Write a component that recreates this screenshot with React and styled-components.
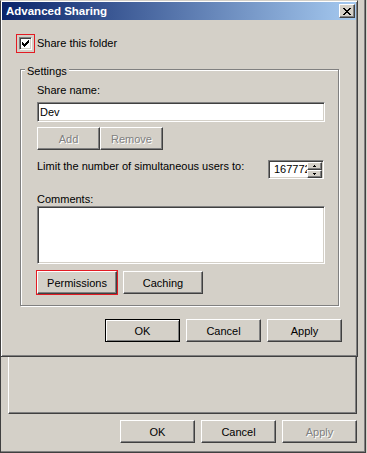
import React from "react";
import styled, { createGlobalStyle, css } from "styled-components";

const GlobalStyle = createGlobalStyle`
  html, body { margin: 0; padding: 0; background: #d4d0c8; }
  body {
    font-family: "Liberation Sans", Arial, sans-serif;
    font-size: 11px;
    color: #000;
  }
  *, *::before, *::after { box-sizing: border-box; }
`;

const raised = css`
  border: 1px solid;
  border-color: #fff #404040 #404040 #fff;
  box-shadow: inset -1px -1px 0 #808080;
`;

const sunken = css`
  border: 1px solid;
  border-color: #808080 #fff #fff #808080;
  box-shadow: inset 1px 1px 0 #404040, inset -1px -1px 0 #d4d0c8;
`;

const Desktop = styled.div`
  position: relative;
  width: 367px;
  height: 453px;
  overflow: hidden;
  background: #d4d0c8;
`;

/* Parent "Properties" window behind the dialog */
const ParentWindow = styled.div`
  width: 366px;
  height: 453px;
  display: flex;
  flex-direction: column;
  justify-content: flex-end;
  border: 1px solid #404040;
  border-top: none;
  box-shadow: inset -1px -1px 0 #808080;
  padding: 0 8px 9px 7px;
  background: #d4d0c8;
`;

const TabPanel = styled.div`
  flex: 1;
  margin-top: 40px;
  ${raised};
`;

const ButtonRow = styled.div`
  display: flex;
  justify-content: flex-end;
  gap: 6px;
  margin-top: ${(p) => p.$mt || 0}px;
  padding-right: ${(p) => p.$pr || 0}px;
`;

const Button = styled.button`
  width: ${(p) => p.$w || 75}px;
  height: 23px;
  padding: 0;
  margin: 0;
  font-family: inherit;
  font-size: 11px;
  color: #000;
  background: #d4d0c8;
  border-radius: 0;
  ${raised};
  ${(p) =>
    p.$default &&
    css`
      border-color: #000;
      box-shadow: inset 1px 1px 0 #fff, inset -1px -1px 0 #808080;
    `}
  ${(p) =>
    p.disabled &&
    css`
      color: #808080;
      text-shadow: 1px 1px 0 #fff;
    `}
  ${(p) =>
    p.$focus &&
    css`
      outline: 1px solid #e31b23;
      outline-offset: 0;
    `}
`;

/* Advanced Sharing dialog, a window lying over the parent */
const Dialog = styled.div`
  position: absolute;
  left: 0;
  top: 0;
  width: 358px;
  height: 357px;
  display: flex;
  flex-direction: column;
  padding: 1px;
  background: #d4d0c8;
  border: 1px solid;
  border-color: #d4d0c8 #404040 #404040 #404040;
  box-shadow: inset 1px 1px 0 #fff, inset -1px -1px 0 #808080;
`;

const TitleBar = styled.div`
  height: 18px;
  display: flex;
  align-items: center;
  justify-content: space-between;
  padding: 0 1px 0 4px;
  background: linear-gradient(to right, #0a246a, #a6caf0);
`;

const Title = styled.span`
  color: #fff;
  font-weight: bold;
  font-size: 11.5px;
  line-height: 18px;
  white-space: nowrap;
`;

const CloseButton = styled.div`
  width: 16px;
  height: 14px;
  display: flex;
  align-items: center;
  justify-content: center;
  background: #d4d0c8;
  ${raised};
`;

const CheckRow = styled.div`
  display: flex;
  align-items: center;
  margin: 14px 0 0 14px;
`;

const FocusBox = styled.span`
  display: flex;
  padding: 2px;
  border: 1px solid #e31b23;
`;

const CheckBox = styled.span`
  width: 13px;
  height: 13px;
  display: flex;
  align-items: center;
  justify-content: center;
  background: #fff;
  ${sunken};
`;

const Text = styled.span`
  display: block;
  line-height: 13px;
  white-space: nowrap;
  margin-left: ${(p) => p.$ml || 0}px;
  margin-top: ${(p) => p.$mt || 0}px;
`;

const GroupBox = styled.div`
  position: relative;
  margin: 16px 0 0 18px;
  width: 319px;
  height: 237px;
  display: flex;
  flex-direction: column;
  align-items: flex-start;
  padding: 14px 12px 0 16px;
  border: 1px solid #808080;
  box-shadow: 1px 1px 0 #fff, inset 1px 1px 0 #fff;
`;

const Legend = styled.span`
  position: absolute;
  top: -5px;
  left: 4px;
  padding: 0 2px;
  line-height: 13px;
  background: #d4d0c8;
`;

const TextField = styled.input`
  display: block;
  width: 288px;
  height: 20px;
  margin: 5px 0 0 0;
  padding: 0 2px;
  font-family: inherit;
  font-size: 11px;
  color: #000;
  background: #fff;
  outline: none;
  ${sunken};
`;

const TextArea = styled.textarea`
  display: block;
  width: 288px;
  height: 58px;
  margin: 0;
  padding: 2px;
  resize: none;
  font-family: inherit;
  font-size: 11px;
  background: #fff;
  outline: none;
  ${sunken};
`;

const Pair = styled.div`
  display: flex;
  gap: ${(p) => p.$gap || 0}px;
  margin-top: ${(p) => p.$mt || 0}px;
`;

const LimitRow = styled.div`
  align-self: stretch;
  display: flex;
  justify-content: space-between;
  align-items: flex-start;
  margin-top: 10px;
`;

const Spin = styled.div`
  width: 56px;
  height: 19px;
  margin-right: 2px;
  display: flex;
  background: #fff;
  ${sunken};
`;

const SpinValue = styled.span`
  flex: 1;
  overflow: hidden;
  white-space: nowrap;
  padding-left: 5px;
  line-height: 17px;
`;

const SpinButtons = styled.div`
  display: flex;
  flex-direction: column;
  margin: 1px 1px 0 0;
`;

const SpinButton = styled.div`
  width: 15px;
  height: 8px;
  display: flex;
  align-items: center;
  justify-content: center;
  background: #d4d0c8;
  ${raised};
`;

const Check = () => (
  <svg width="7" height="7" viewBox="0 0 7 7" shapeRendering="crispEdges">
    <path
      fill="#000"
      d="M0 2h1v3H0zM1 3h1v3H1zM2 4h1v3H2zM3 3h1v3H3zM4 2h1v3H4zM5 1h1v3H5zM6 0h1v3H6z"
    />
  </svg>
);

const CloseGlyph = () => (
  <svg width="8" height="7" viewBox="0 0 8 7" shapeRendering="crispEdges">
    <path
      fill="#000"
      d="M0 0h2v1H0zM6 0h2v1H6zM1 1h2v1H1zM5 1h2v1H5zM2 2h4v1H2zM3 3h2v1H3zM2 4h4v1H2zM1 5h2v1H1zM5 5h2v1H5zM0 6h2v1H0zM6 6h2v1H6z"
    />
  </svg>
);

const Arrow = ({ down }) => (
  <svg width="3" height="2" viewBox="0 0 3 2" shapeRendering="crispEdges">
    <path fill="#000" d={down ? "M0 0h3v1H0zM1 1h1v1H1z" : "M1 0h1v1H1zM0 1h3v1H0z"} />
  </svg>
);

export default function App() {
  return (
    <>
      <GlobalStyle />
      <Desktop>
        <ParentWindow>
          <TabPanel />
          <ButtonRow $mt={6}>
            <Button>OK</Button>
            <Button>Cancel</Button>
            <Button disabled>Apply</Button>
          </ButtonRow>
        </ParentWindow>

        <Dialog>
          <TitleBar>
            <Title>Advanced Sharing</Title>
            <CloseButton>
              <CloseGlyph />
            </CloseButton>
          </TitleBar>

          <CheckRow>
            <FocusBox>
              <CheckBox>
                <Check />
              </CheckBox>
            </FocusBox>
            <Text $ml={2}>Share this folder</Text>
          </CheckRow>

          <GroupBox>
            <Legend>Settings</Legend>
            <Text>Share name:</Text>
            <TextField value="Dev" readOnly />
            <Pair $mt={5}>
              <Button $w={63} disabled>
                Add
              </Button>
              <Button $w={63} disabled>
                Remove
              </Button>
            </Pair>
            <LimitRow>
              <Text>Limit the number of simultaneous users to:</Text>
              <Spin>
                <SpinValue>16777216</SpinValue>
                <SpinButtons>
                  <SpinButton>
                    <Arrow />
                  </SpinButton>
                  <SpinButton>
                    <Arrow down />
                  </SpinButton>
                </SpinButtons>
              </Spin>
            </LimitRow>
            <Text $mt={14}>Comments:</Text>
            <TextArea readOnly />
            <Pair $mt={7} $gap={6}>
              <Button $w={80} $focus>
                Permissions
              </Button>
              <Button $w={80}>Caching</Button>
            </Pair>
          </GroupBox>

          <ButtonRow $mt={13} $pr={14}>
            <Button $default>OK</Button>
            <Button>Cancel</Button>
            <Button>Apply</Button>
          </ButtonRow>
        </Dialog>
      </Desktop>
    </>
  );
}
